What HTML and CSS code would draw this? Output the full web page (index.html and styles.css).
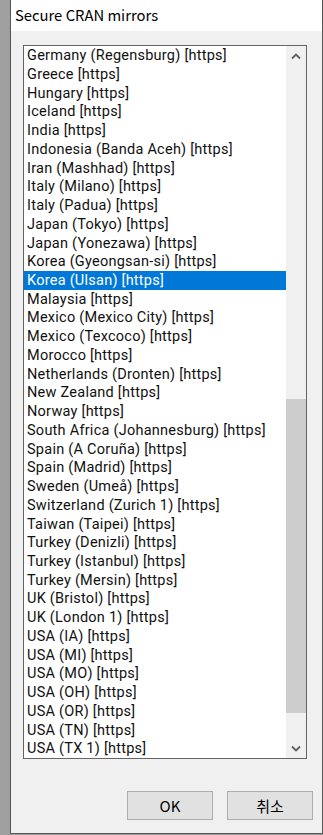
FILE: index.html
```html
<!DOCTYPE html>
<html>
<head>
	<meta charset="utf-8">
	<title>Secure CRAN mirrors</title>
	<link rel="stylesheet" href="styles.css">
</head>
<body>
	<div class="window">
		<div class="titlebar">Secure CRAN mirrors</div>
		<div class="client">
			<div class="listbox">
				<ul class="items">
					<li>Germany (Regensburg) [https]</li>
					<li>Greece [https]</li>
					<li>Hungary [https]</li>
					<li>Iceland [https]</li>
					<li>India [https]</li>
					<li>Indonesia (Banda Aceh) [https]</li>
					<li>Iran (Mashhad) [https]</li>
					<li>Italy (Milano) [https]</li>
					<li>Italy (Padua) [https]</li>
					<li>Japan (Tokyo) [https]</li>
					<li>Japan (Yonezawa) [https]</li>
					<li>Korea (Gyeongsan-si) [https]</li>
					<li class="selected">Korea (Ulsan) [https]</li>
					<li>Malaysia [https]</li>
					<li>Mexico (Mexico City) [https]</li>
					<li>Mexico (Texcoco) [https]</li>
					<li>Morocco [https]</li>
					<li>Netherlands (Dronten) [https]</li>
					<li>New Zealand [https]</li>
					<li>Norway [https]</li>
					<li>South Africa (Johannesburg) [https]</li>
					<li>Spain (A Coruña) [https]</li>
					<li>Spain (Madrid) [https]</li>
					<li>Sweden (Umeå) [https]</li>
					<li>Switzerland (Zurich 1) [https]</li>
					<li>Taiwan (Taipei) [https]</li>
					<li>Turkey (Denizli) [https]</li>
					<li>Turkey (Istanbul) [https]</li>
					<li>Turkey (Mersin) [https]</li>
					<li>UK (Bristol) [https]</li>
					<li>UK (London 1) [https]</li>
					<li>USA (IA) [https]</li>
					<li>USA (MI) [https]</li>
					<li>USA (MO) [https]</li>
					<li>USA (OH) [https]</li>
					<li>USA (OR) [https]</li>
					<li>USA (TN) [https]</li>
					<li>USA (TX 1) [https]</li>
				</ul>
				<div class="scrollbar">
					<div class="arrow">
						<svg width="10" height="7" viewBox="0 0 10 7"><polyline points="1,5.5 5,1.5 9,5.5" fill="none" stroke="#606060" stroke-width="1.8"/></svg>
					</div>
					<div class="track">
						<div class="thumb"></div>
					</div>
					<div class="arrow">
						<svg width="10" height="7" viewBox="0 0 10 7"><polyline points="1,1.5 5,5.5 9,1.5" fill="none" stroke="#606060" stroke-width="1.8"/></svg>
					</div>
				</div>
			</div>
			<div class="buttons">
				<button class="btn">OK</button>
				<button class="btn">취소</button>
			</div>
		</div>
	</div>
</body>
</html>
```

FILE: styles.css
```css
*{
	margin:0;
	padding:0;
	box-sizing:border-box;
}
body{
	width:323px;
	height:835px;
	background:#9f9f9f;
	font-family:"Noto Sans CJK KR","Noto Sans",sans-serif;
	overflow:hidden;
}
.window{
	margin-left:10px;
	width:313px;
	height:834px;
	border:1px solid #565656;
	border-top:none;
	display:flex;
	flex-direction:column;
}
.titlebar{
	height:31px;
	background:#fff;
	padding:6px 0 0 4px;
	font-size:14.8px;
	line-height:18px;
	color:#000;
}
.client{
	flex:1;
	background:#f0f0f0;
	padding:14px 0 0 12px;
}
.listbox{
	width:284px;
	height:714px;
	border:1px solid #646464;
	background:#fff;
	display:flex;
}
.items{
	flex:1;
	list-style:none;
	font-family:Roboto,"Noto Sans",sans-serif;
	font-size:14.5px;
	letter-spacing:0.25px;
	color:#111;
}
.items li{
	height:18.737px;
	line-height:17px;
	padding:1.2px 0 0.537px 3px;
	white-space:nowrap;
}
.items li.selected{
	background:#0078d7;
	color:#fff;
}
.scrollbar{
	width:20px;
	background:#f0f0f0;
	display:flex;
	flex-direction:column;
}
.arrow{
	height:20px;
	display:flex;
	align-items:center;
	justify-content:center;
}
.track{
	flex:1;
	display:flex;
	flex-direction:column;
	justify-content:flex-end;
}
.thumb{
	height:314px;
	margin-bottom:25px;
	background:#cdcdcd;
}
.buttons{
	display:flex;
	justify-content:flex-end;
	gap:14px;
	margin-top:32px;
	padding-right:9px;
}
.btn{
	width:86px;
	height:29px;
	background:#e1e1e1;
	border:1px solid #adadad;
	font-family:"Noto Sans CJK KR","Noto Sans",sans-serif;
	font-size:15px;
	color:#000;
}
```
